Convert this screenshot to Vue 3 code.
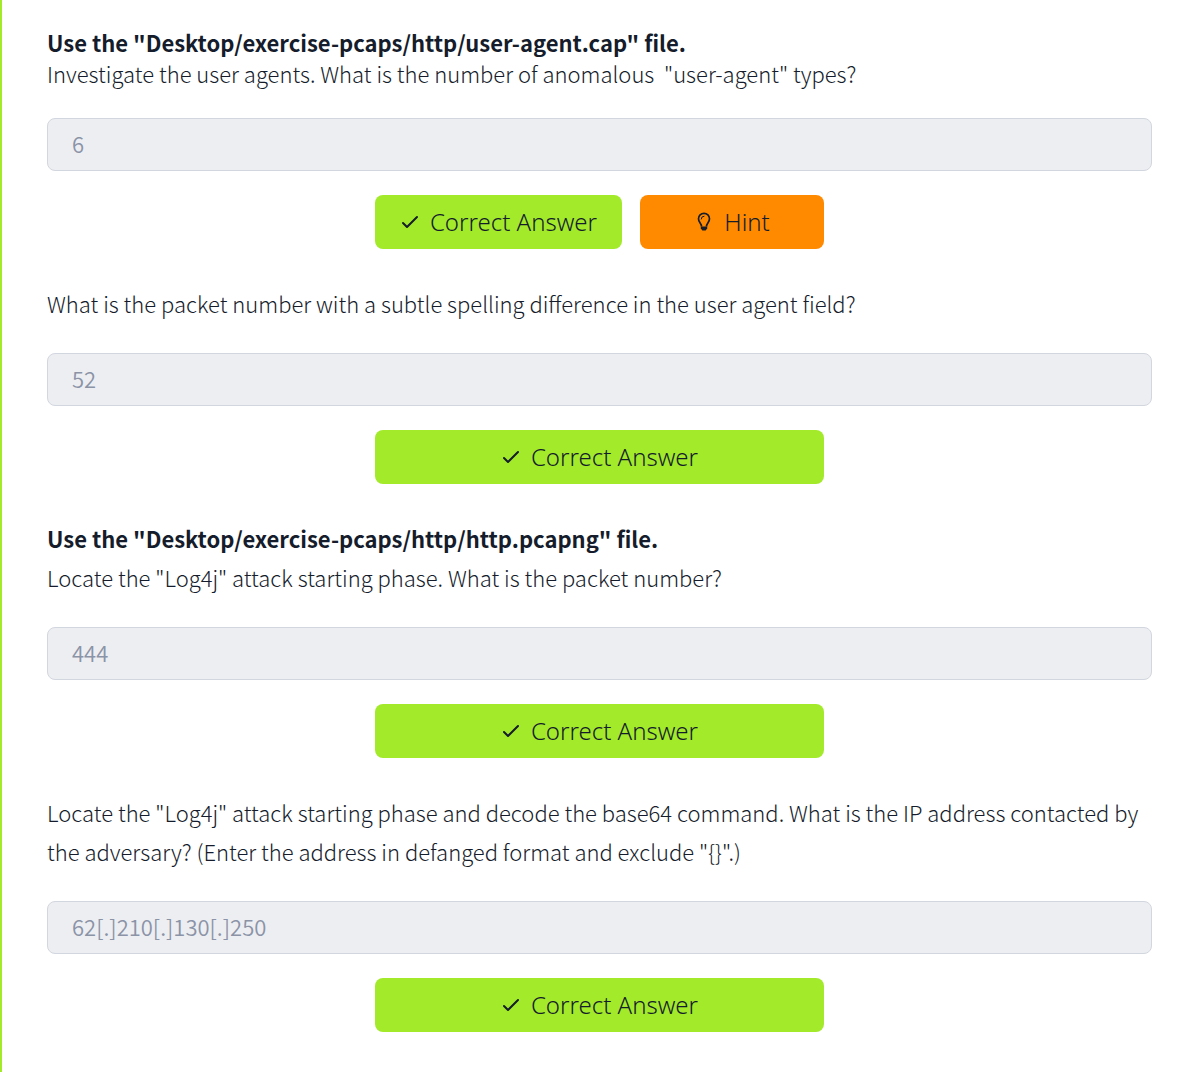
<script setup>
import { ref } from 'vue'

const questions = ref([
  {
    id: 'agents',
    compact: true,
    file: 'Use the "Desktop/exercise-pcaps/http/user-agent.cap" file.',
    text: 'Investigate the user agents. What is the number of anomalous \u00a0"user-agent" types?',
    answer: '6',
    hint: true
  },
  {
    id: 'spelling',
    text: 'What is the packet number with a subtle spelling difference in the user agent field?',
    answer: '52'
  },
  {
    id: 'phase',
    file: 'Use the "Desktop/exercise-pcaps/http/http.pcapng" file.',
    text: 'Locate the "Log4j" attack starting phase. What is the packet number?',
    answer: '444'
  },
  {
    id: 'address',
    text: 'Locate the "Log4j" attack starting phase and decode the base64 command. What is the IP address contacted by the adversary? (Enter the address in defanged format and exclude "{}".)',
    answer: '62[.]210[.]130[.]250'
  }
])
</script>

<template>
  <main class="task">
    <form v-for="q in questions" :key="q.id" class="question" @submit.prevent>
      <label class="prompt" :class="{ compact: q.compact }" :for="q.id">
        <strong v-if="q.file">{{ q.file }}</strong>
        <span>{{ q.text }}</span>
      </label>
      <input :id="q.id" class="answer" type="text" :value="q.answer" disabled />
      <div class="actions">
        <button class="btn correct" type="submit">
          <svg class="icon" viewBox="0 0 20 20" aria-hidden="true">
            <path d="M3 12l4 4L17 6" fill="none" stroke="currentColor" stroke-width="2" stroke-linecap="round" stroke-linejoin="round" />
          </svg>
          <span>Correct Answer</span>
        </button>
        <button v-if="q.hint" class="btn hint" type="button">
          <svg class="icon" viewBox="0 0 20 20" aria-hidden="true">
            <path d="M7.500 15.500C7.500 12.500 4.500 11.500 4.500 7.800a5.500 5.500 0 0 1 11 0c0 3.700-3 4.700-3 7.700" fill="none" stroke="currentColor" stroke-width="1.700" stroke-linejoin="round" />
            <path d="M7.200 8A2.800 2.800 0 0 1 10 5.200" fill="none" stroke="currentColor" stroke-width="1" stroke-linecap="round" />
            <path d="M6.800 15.500h6.400v1.700L11.700 19.500H8.300l-1.500-2.300z" fill="currentColor" />
          </svg>
          <span>Hint</span>
        </button>
      </div>
    </form>
  </main>
</template>

<style>
body {
  margin: 0;
  background: #fff;
}
</style>

<style scoped>
.task {
  display: flex;
  flex-direction: column;
  gap: 35px;
  padding: 27px 31px 41px 45px;
  border-left: 2px solid #a3ea2a;
  color: #151c2b;
  font-family: "Noto Sans CJK SC", sans-serif;
  font-size: 22px;
  font-weight: 300;
  line-height: 39px;
}

.question {
  display: flex;
  flex-direction: column;
}

.prompt {
  display: flex;
  flex-direction: column;
  margin-bottom: 30px;
}

.prompt.compact {
  margin-bottom: 29px;
  line-height: 31px;
}

.prompt strong {
  font-weight: 700;
}

.answer {
  box-sizing: border-box;
  width: 100%;
  height: 53px;
  padding: 0 24px 4px;
  border: 1px solid #d2d6de;
  border-radius: 8px;
  background: #edeef2;
  color: #8b93a7;
  font: inherit;
  font-weight: 350;
}

.actions {
  display: flex;
  gap: 18px;
  width: 100%;
  max-width: 449px;
  margin: 24px auto 0;
}

.btn {
  display: flex;
  flex: 1 1 auto;
  align-items: center;
  justify-content: center;
  gap: 10px;
  height: 54px;
  padding: 0 16px 2px;
  border: 0;
  border-radius: 8px;
  color: #151c2b;
  font-family: "Noto Sans", sans-serif;
  font-size: 24px;
  font-weight: 350;
  white-space: nowrap;
  cursor: pointer;
}

.correct {
  background: #a3ea2a;
}

.hint {
  flex: 0 0 184px;
  background: #ff8a00;
}

.icon {
  flex: none;
  width: 20px;
  height: 20px;
}
</style>
